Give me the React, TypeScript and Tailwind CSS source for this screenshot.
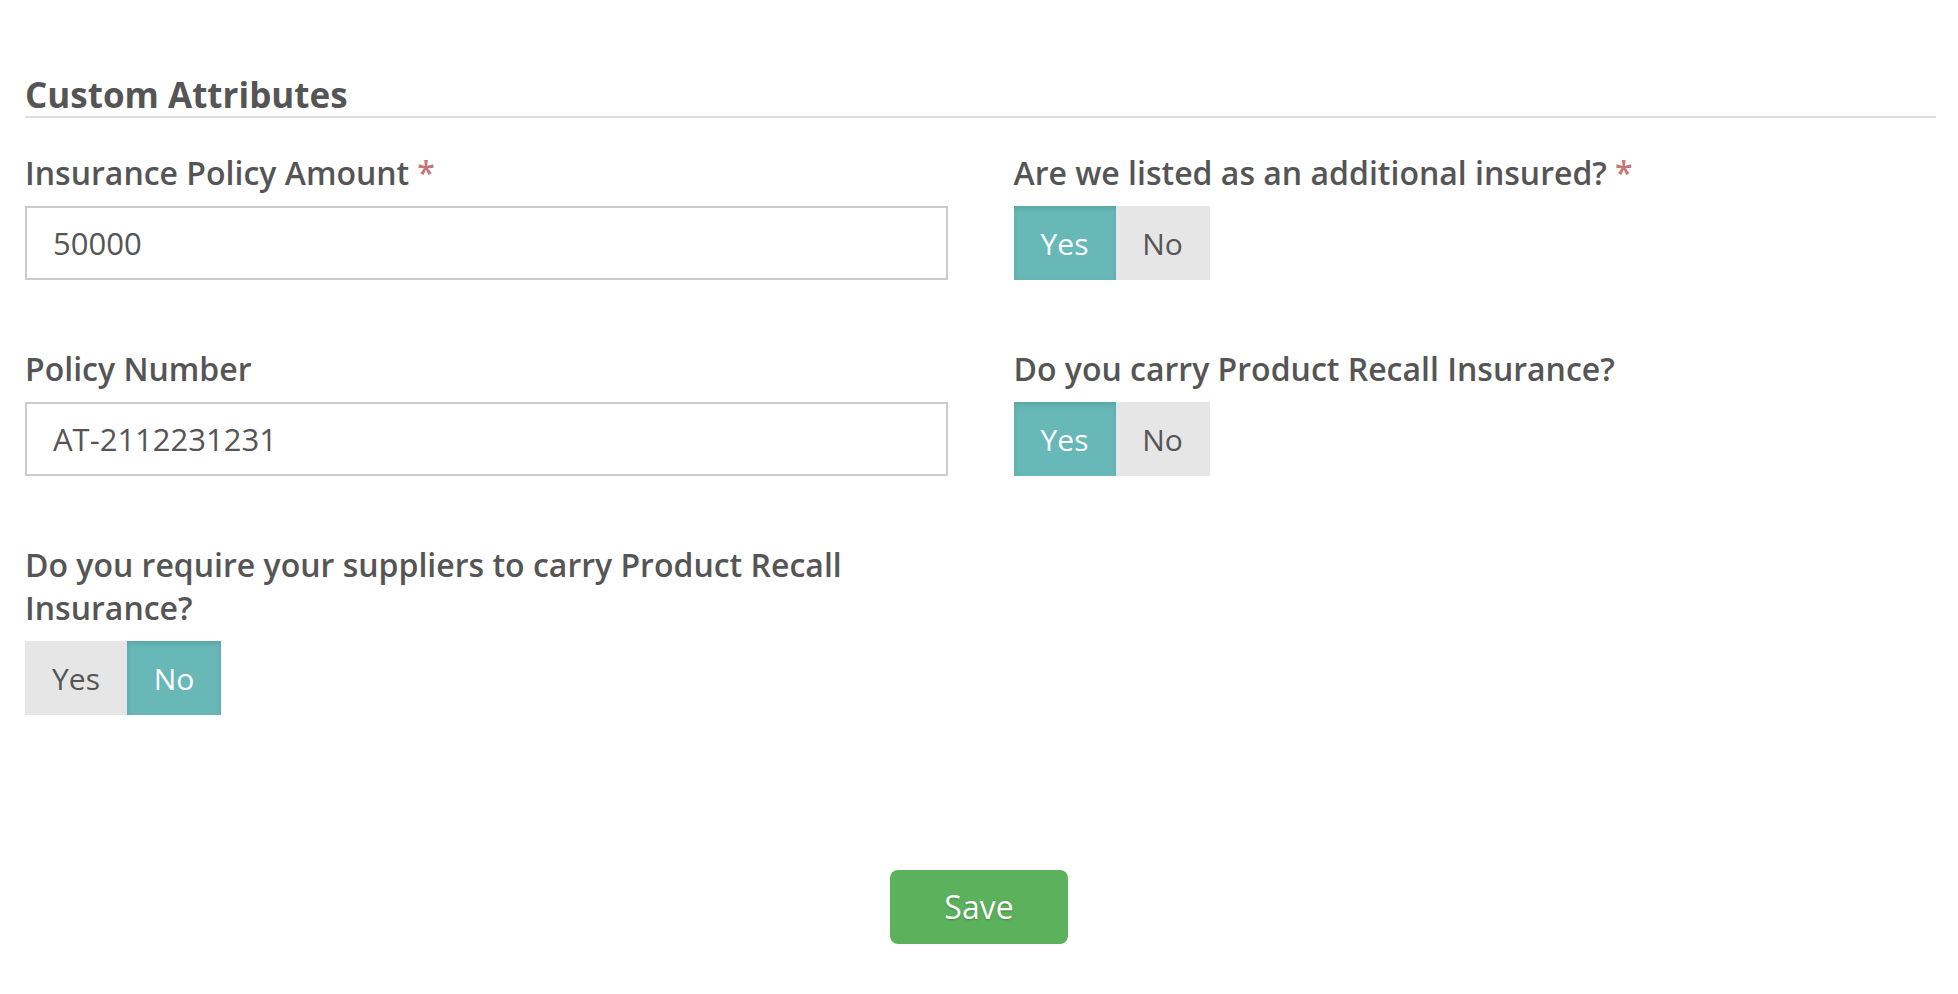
import { useState } from 'react'

type Choice = 'yes' | 'no'

const font = { fontFamily: '"Open Sans", "Liberation Sans", sans-serif' }

const Label = ({ text, required }: { text: string; required?: boolean }) => (
  <label className="block text-[32px] font-semibold leading-[43px] text-[#555] mb-[12px]">
    {text}
    {required && <span className="ml-[8px] text-[#c27878]">*</span>}
  </label>
)

const TextField = ({ value }: { value: string }) => (
  <input
    defaultValue={value}
    className="block w-full h-[74px] border-2 border-[#ccc] bg-white pl-[26px] text-[31px] text-[#555] outline-none"
    style={font}
  />
)

const Toggle = ({ initial }: { initial: Choice }) => {
  const [value, setValue] = useState<Choice>(initial)
  const on = 'bg-[#67b8b7] text-white shadow-[inset_0_3px_5px_rgba(0,0,0,0.1)]'
  const off = 'bg-[#e6e6e6] text-[#555]'
  return (
    <div className="flex h-[74px]">
      <button
        type="button"
        onClick={() => setValue('yes')}
        className={`w-[102px] h-full text-[30px] ${value === 'yes' ? on : off}`}
        style={font}
      >
        Yes
      </button>
      <button
        type="button"
        onClick={() => setValue('no')}
        className={`w-[94px] h-full text-[30px] ${value === 'no' ? on : off}`}
        style={font}
      >
        No
      </button>
    </div>
  )
}

export default function App() {
  return (
    <div className="min-h-screen bg-white pl-[25px] pr-[22px] pt-[76px]" style={font}>
      <h2 className="text-[35px] font-bold leading-[38px] text-[#555] border-b-2 border-[#ddd] pb-[2px]">
        Custom Attributes
      </h2>

      <div className="grid grid-cols-2 gap-x-[66px] gap-y-[67px] mt-[33px]">
        <div>
          <Label text="Insurance Policy Amount" required />
          <TextField value="50000" />
        </div>
        <div>
          <Label text="Are we listed as an additional insured?" required />
          <Toggle initial="yes" />
        </div>
        <div>
          <Label text="Policy Number" />
          <TextField value="AT-2112231231" />
        </div>
        <div>
          <Label text="Do you carry Product Recall Insurance?" />
          <Toggle initial="yes" />
        </div>
        <div>
          <Label text="Do you require your suppliers to carry Product Recall Insurance?" />
          <Toggle initial="no" />
        </div>
      </div>

      <div className="flex justify-center mt-[155px] pr-[3px]">
        <button
          type="button"
          className="w-[178px] h-[74px] rounded-[8px] bg-[#5cb25c] text-[32px] text-white [text-shadow:0_1px_2px_rgba(0,0,0,0.25)]"
          style={font}
        >
          Save
        </button>
      </div>
    </div>
  )
}
